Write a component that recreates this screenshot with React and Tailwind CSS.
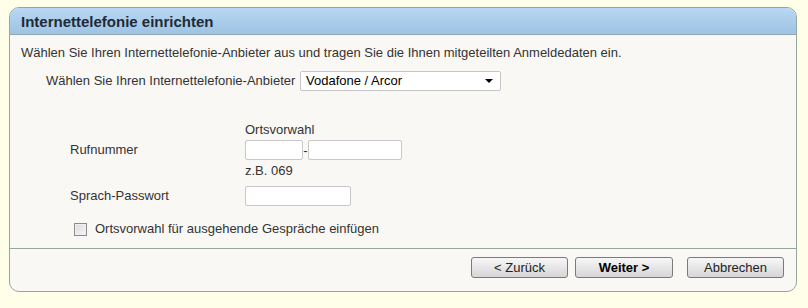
export default function App() {
  const font = { fontFamily: '"Liberation Sans", Arial, sans-serif' }
  return <div className="w-[808px] h-[308px] bg-[#fffee9] pt-[7px] pl-[9px] text-[13px] text-[#333]" style={font}>
    <div className="w-[788px] h-[285px] bg-[#f9f8f5] border border-[#93a79f] rounded-[10px] overflow-hidden flex flex-col">
      <div className="h-[27px] shrink-0 bg-gradient-to-b from-[#b8d8f3] to-[#9ec3e3] border-b border-[#8fa7b2] pl-[11px] flex items-center">
        <span className="text-[15px] font-bold text-[#1e2a36] leading-none">Internettelefonie einrichten</span>
      </div>
      <p className="mt-[10px] pl-[11px] leading-[16px]">Wählen Sie Ihren Internettelefonie-Anbieter aus und tragen Sie die Ihnen mitgeteilten Anmeldedaten ein.</p>
      <div className="mt-[10px] flex items-center pl-[36px] h-[20px]">
        <span className="w-[254px]">Wählen Sie Ihren Internettelefonie-Anbieter</span>
        <div className="w-[201px] h-[20px] bg-white border border-[#c6c6c6] rounded-[2px] flex items-center justify-between pl-[5px] pr-[7px] text-[13px] text-black">
          <span>Vodafone / Arcor</span>
          <span className="w-0 h-0 border-l-[4px] border-r-[4px] border-t-[4px] border-l-transparent border-r-transparent border-t-black" />
        </div>
      </div>
      <div className="mt-[31px] grid grid-cols-[175px_1fr] pl-[60px] leading-[16px]">
        <span />
        <span>Ortsvorwahl</span>
        <span className="mt-[2px] h-[20px] flex items-center">Rufnummer</span>
        <div className="mt-[2px] flex items-center h-[20px]">
          <div className="w-[58px] h-[20px] bg-white border border-[#c8c8c8] rounded-[2px]" />
          <span className="w-[5px] text-center leading-none">-</span>
          <div className="w-[94px] h-[20px] bg-white border border-[#c8c8c8] rounded-[2px]" />
        </div>
        <span className="mt-[3px]" />
        <span className="mt-[3px]">z.B. 069</span>
        <span className="mt-[7px] h-[20px] flex items-center">Sprach-Passwort</span>
        <div className="mt-[7px] w-[106px] h-[20px] bg-white border border-[#c8c8c8] rounded-[2px]" />
      </div>
      <div className="mt-[15px] pl-[64px] flex items-center h-[16px]">
        <span className="w-[13px] h-[13px] border border-[#8c8c8c] bg-gradient-to-br from-[#dcdcdc] to-[#f6f6f6] shadow-[inset_0_0_0_1px_#f0f0f0]" />
        <span className="ml-[8px]">Ortsvorwahl für ausgehende Gespräche einfügen</span>
      </div>
      <div className="mt-[11px] border-t border-[#93a79f] flex justify-end pr-[12px] pt-[8px]">
        <button className="w-[97px] h-[21px] border border-[#7a7a7a] rounded-[3px] bg-gradient-to-b from-[#f7f7f7] to-[#d6d6d6] text-[13px] text-[#222] leading-none">&lt; Zurück</button>
        <button className="ml-[7px] w-[98px] h-[21px] border border-[#7a7a7a] rounded-[3px] bg-gradient-to-b from-[#f7f7f7] to-[#d6d6d6] text-[13px] font-bold text-black leading-none">Weiter &gt;</button>
        <button className="ml-[14px] w-[97px] h-[21px] border border-[#7a7a7a] rounded-[3px] bg-gradient-to-b from-[#f7f7f7] to-[#d6d6d6] text-[13px] text-[#222] leading-none">Abbrechen</button>
      </div>
    </div>
  </div>
}
